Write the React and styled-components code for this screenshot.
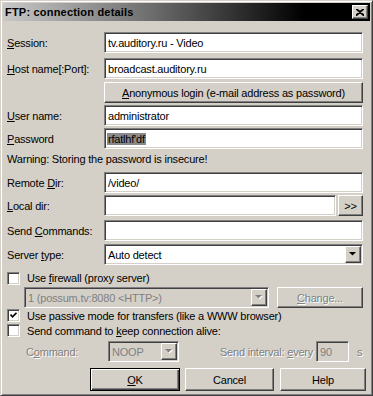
import React from "react";
import styled, { createGlobalStyle, css } from "styled-components";

const Global = createGlobalStyle`
  html, body {
    margin: 0;
    padding: 0;
    background: #d4d0c8;
  }
  * {
    box-sizing: border-box;
  }
`;

const face = "#d4d0c8";

const sunken = css`
  border: 1px solid;
  border-color: #808080 #fff #fff #808080;
  box-shadow: inset 1px 1px #404040, inset -1px -1px ${face};
`;

const raised = css`
  border: 1px solid;
  border-color: #fff #404040 #404040 #fff;
  box-shadow: inset -1px -1px #808080;
`;

const Window = styled.div`
  width: 373px;
  height: 396px;
  background: ${face};
  border: 1px solid;
  border-color: ${face} #404040 #404040 ${face};
  box-shadow: inset 1px 1px #fff, inset -1px -1px #808080;
  padding: 2px;
  font-family: "Liberation Sans", Arial, sans-serif;
  font-size: 11px;
  letter-spacing: -0.2px;
  color: #000;
  display: flex;
  flex-direction: column;
`;

const TitleBar = styled.div`
  height: 18px;
  display: flex;
  align-items: center;
  justify-content: space-between;
  padding: 0 2px 0 2px;
  background: linear-gradient(to right, #c8c8c8 0%, #6e6e6e 40%, #000 82%);
`;

const Title = styled.span`
  font-weight: bold;
  font-size: 11px;
  letter-spacing: 0.2px;
`;

const CloseButton = styled.div`
  width: 16px;
  height: 14px;
  background: ${face};
  ${raised};
  display: flex;
  align-items: center;
  justify-content: center;
`;

const Body = styled.div`
  display: flex;
  flex-direction: column;
  padding: 0 7px 0 4px;
`;

const Row = styled.div`
  display: flex;
  align-items: center;
  height: ${(p) => p.$h || 21}px;
  margin-top: ${(p) => p.$mt || 0}px;
  padding-left: ${(p) => p.$indent || 0}px;
`;

const Label = styled.span`
  width: ${(p) => p.$w || 97}px;
  flex-shrink: 0;
  color: ${(p) => (p.$disabled ? "#808080" : "#000")};
  text-shadow: ${(p) => (p.$disabled ? "1px 1px #fff" : "none")};
  text-align: ${(p) => p.$align || "left"};
  padding-left: ${(p) => p.$pl || 0}px;
`;

const Field = styled.div`
  ${sunken};
  height: 100%;
  flex: ${(p) => (p.$w ? "none" : "1")};
  width: ${(p) => (p.$w ? `${p.$w}px` : "auto")};
  background: ${(p) => (p.$disabled ? face : "#fff")};
  color: ${(p) => (p.$disabled ? "#808080" : "#000")};
  display: flex;
  align-items: center;
  padding: 0 3px;
  white-space: nowrap;
  overflow: hidden;
`;

const Selected = styled.span`
  background: #8a8a8a;
  color: #000;
  margin-left: -1px;
  padding: 0 1px;
`;

const Button = styled.div`
  ${raised};
  background: ${face};
  height: 100%;
  flex: ${(p) => (p.$w ? "none" : "1")};
  width: ${(p) => (p.$w ? `${p.$w}px` : "auto")};
  margin-left: ${(p) => p.$ml || 0}px;
  display: flex;
  align-items: center;
  justify-content: center;
  color: ${(p) => (p.$disabled ? "#808080" : "#000")};
  text-shadow: ${(p) => (p.$disabled ? "1px 1px #fff" : "none")};
  ${(p) =>
    p.$default &&
    css`
      border: 1px solid #000;
      box-shadow: inset 1px 1px #fff, inset -1px -1px #404040,
        inset -2px -2px #808080;
    `}
`;

const Combo = styled(Field)`
  padding-right: 1px;
  justify-content: space-between;
`;

const ArrowBox = styled.div`
  ${raised};
  width: 16px;
  height: 17px;
  background: ${face};
  display: flex;
  align-items: center;
  justify-content: center;
  flex-shrink: 0;
`;

const Check = styled.div`
  ${sunken};
  width: 13px;
  height: 13px;
  background: #fff;
  margin-right: 7px;
  flex-shrink: 0;
  display: flex;
  align-items: center;
  justify-content: center;
`;

const Warning = styled.div`
  height: 23px;
  padding-top: 4px;
  line-height: 13px;
`;

const U = styled.u`
  text-decoration-thickness: 1px;
  text-underline-offset: 1px;
`;

const Arrow = ({ disabled }) => (
  <svg width="8" height="5" viewBox="0 0 8 5">
    {disabled && <polygon points="1,1 8,1 4.5,4.5" fill="#fff" />}
    <polygon points="0,0 7,0 3.5,3.5" fill={disabled ? "#808080" : "#000"} />
  </svg>
);

const DropDown = ({ children, disabled, w }) => (
  <Combo $disabled={disabled} $w={w}>
    <span>{children}</span>
    <ArrowBox>
      <Arrow disabled={disabled} />
    </ArrowBox>
  </Combo>
);

const CheckMark = () => (
  <svg width="7" height="7" viewBox="0 0 7 7">
    <polyline
      points="0.5,2.5 2.5,4.8 6.5,0.8"
      fill="none"
      stroke="#000"
      strokeWidth="1.6"
    />
  </svg>
);

const InputRow = ({ label, children, mt }) => (
  <Row $mt={mt}>
    <Label>{label}</Label>
    {children}
  </Row>
);

export default function App() {
  return (
    <>
      <Global />
      <Window>
        <TitleBar>
          <Title>FTP: connection details</Title>
          <CloseButton>
            <svg width="8" height="7" viewBox="0 0 8 7">
              <path d="M0 0 L8 7 M8 0 L0 7 M1 0 L8 6.2 M7 0 L0 6.2" stroke="#000" strokeWidth="1.3" />
            </svg>
          </CloseButton>
        </TitleBar>
        <Body>
          <InputRow mt={11} label={<><U>S</U>ession:</>}>
            <Field>tv.auditory.ru - Video</Field>
          </InputRow>
          <InputRow mt={5} label={<><U>H</U>ost name[:Port]:</>}>
            <Field>broadcast.auditory.ru</Field>
          </InputRow>
          <InputRow mt={3} label="">
            <Button>
              <span>
                <U>A</U>nonymous login (e-mail address as password)
              </span>
            </Button>
          </InputRow>
          <InputRow mt={2} label={<><U>U</U>ser name:</>}>
            <Field>administrator</Field>
          </InputRow>
          <InputRow mt={2} label={<><U>P</U>assword</>}>
            <Field>
              <Selected>rfatlhf'df</Selected>
            </Field>
          </InputRow>
          <Warning>Warning: Storing the password is insecure!</Warning>
          <InputRow label={<>Remote <U>D</U>ir:</>}>
            <Field>/video/</Field>
          </InputRow>
          <InputRow mt={2} label={<><U>L</U>ocal dir:</>}>
            <Field />
            <Button $w={25} $ml={2}>&gt;&gt;</Button>
          </InputRow>
          <InputRow mt={4} label={<>Send <U>C</U>ommands:</>}>
            <Field />
          </InputRow>
          <InputRow mt={3} label={<>Server <U>t</U>ype:</>}>
            <DropDown>Auto detect</DropDown>
          </InputRow>
          <Row $mt={5} $h={16}>
            <Check />
            <span>
              Use <U>f</U>irewall (proxy server)
            </span>
          </Row>
          <Row $mt={1} $indent={17}>
            <DropDown disabled w={245}>
              1 (possum.tv:8080 &lt;HTTP&gt;)
            </DropDown>
            <Button $w={86} $ml={8} $disabled>
              <span>
                <U>C</U>hange...
              </span>
            </Button>
          </Row>
          <Row $h={15}>
            <Check>
              <CheckMark />
            </Check>
            <span>Use passive mode for transfers (like a WWW browser)</span>
          </Row>
          <Row $h={15}>
            <Check />
            <span>
              Send command to <U>k</U>eep connection alive:
            </span>
          </Row>
          <Row $mt={3} $indent={19}>
            <Label $w={82} $disabled>
              C<U>o</U>mmand:
            </Label>
            <DropDown disabled w={71}>
              NOOP
            </DropDown>
            <Label $w={137} $align="right" $disabled>
              Send interval: <U>e</U>very&nbsp;
            </Label>
            <Field $w={33} $disabled>
              90
            </Field>
            <Label $w={16} $pl={8} $disabled>
              s
            </Label>
          </Row>
          <Row $mt={6} $h={23} $indent={83}>
            <Button $w={90} $default>
              <span>
                <U>O</U>K
              </span>
            </Button>
            <Button $w={89} $ml={5}>Cancel</Button>
            <Button $w={86} $ml={6}>Help</Button>
          </Row>
        </Body>
      </Window>
    </>
  );
}
